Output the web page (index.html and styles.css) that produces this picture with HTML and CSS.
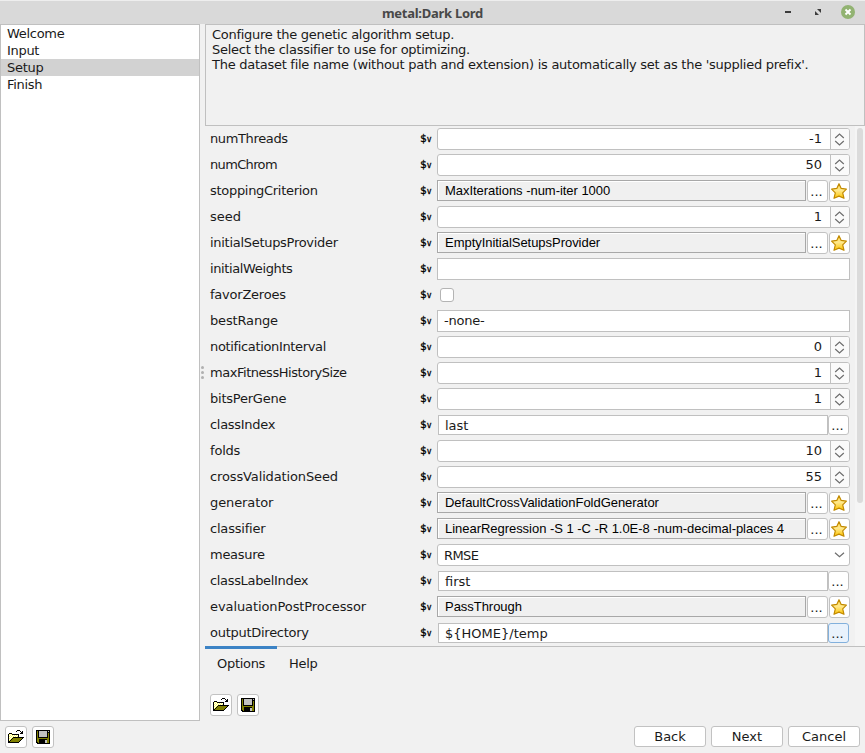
FILE: index.html
```html
<!DOCTYPE html>
<html lang="en">
<head>
<meta charset="utf-8">
<title>metal:Dark Lord</title>
<link rel="stylesheet" href="styles.css">
</head>
<body>
<svg class="defs" aria-hidden="true">
  <defs>
    <linearGradient id="gold" x1="0" y1="0" x2="0" y2="1"><stop offset="0" stop-color="#ffd84a"/><stop offset=".45" stop-color="#ffe98e"/><stop offset="1" stop-color="#fdc400"/></linearGradient>
  </defs>
  <symbol id="star" viewBox="0 0 16 16"><path d="M8 .7l2.200 4.700 5.200.7-3.700 3.700 1.300 5.500L8 13.100l-5 2.200 1.300-5.500L.6 6.100l5.200-.7z" fill="url(#gold)" stroke="#c28a00" stroke-width="1.2" stroke-linejoin="round"/></symbol>
  <symbol id="updown" viewBox="0 0 11 13"><path d="M1.200 5l4.300-4L9.800 5M1.200 8l4.300 4L9.800 8" fill="none" stroke="#6e6e6e" stroke-width="1.2"/></symbol>
  <symbol id="down" viewBox="0 0 11 6"><path d="M1 .7l4.500 4 4.500-4" fill="none" stroke="#6e6e6e" stroke-width="1.2"/></symbol>
  <symbol id="open" viewBox="0 0 16 14"><path fill="#ff6" d="M1 4h3v1h6v3H5v1H4v1H3v1H2v1H1z"/><path fill="#fff" d="M2 4h1v1H2zM1 5h1v1H1zM3 5h1v1H3zM5 5h1v1H5zM7 5h1v1H7zM9 5h1v1H9zM2 6h1v1H2zM4 6h1v1H4zM6 6h1v1H6zM8 6h1v1H8zM1 7h1v1H1zM3 7h1v1H3zM2 8h1v1H2zM1 9h1v1H1z"/><path fill="#808000" d="M5 8h9v1h-1v1h-1v1h-1v1H2v-1h1v-1h1V9h1z"/><path d="M9 0h3v1H9zM8 1h1v1H8zM12 1h1v1h-1zM14 1h1v3h-3V3h1V2h1zM1 3h3v1H1zM0 4h1v9H0zM4 4h7v1H4zM10 5h1v2h-1zM5 7h11v1H5zM4 8h1v1H4zM14 8h1v1h-1zM3 9h1v1H3zM13 9h1v1h-1zM2 10h1v1H2zM12 10h1v1h-1zM1 11h1v1H1zM11 11h1v1h-1zM1 12h10v1H1z"/></symbol>
  <symbol id="save" viewBox="0 0 14 14"><path d="M0 0h14v14H1v-1H0z"/><path fill="#808000" d="M1 1h1v7h10V3h1v10h-2V9H3v4H2v-1H1z"/><path fill="#c0c0c0" d="M3 1h8v6H3zM12 1h1v1h-1zM9 10h2v3H9z"/></symbol>
</svg>

<header class="titlebar">
  <h1>metal:Dark Lord</h1>
  <svg class="win-controls" width="72" height="16" viewBox="0 0 72 16"><path fill="#3c3c3c" d="M2 7h6v2H2zM34 5h4v4zM32 7v4h4z"/><path stroke="#d9d9d9" stroke-width="1" d="M32 5l6 6"/><circle cx="65" cy="8" r="7" fill="#92b372"/><path d="M62.500 5.500l5 5m0-5l-5 5" stroke="#fff" stroke-width="1.900"/></svg>
</header>

<main class="body">
  <nav class="pages">
    <div class="page">Welcome</div><div class="page">Input</div><div class="page selected">Setup</div><div class="page">Finish</div>
  </nav>
  <div class="splitter"><i></i><i></i><i></i></div>
  <section class="content">
    <div class="info">Configure the genetic algorithm setup.<br>Select the classifier to use for optimizing.<br>The dataset file name (without path and extension) is automatically set as the 'supplied prefix'.</div>
    <div class="scroll">
      <div class="form" id="form"></div>
      <div class="track"><div class="thumb"></div></div>
    </div>
    <div class="tabs"><div class="tab active">Options</div><div class="tab">Help</div></div>
    <div class="tools">
      <button class="btn icon"><svg class="px" width="16" height="14"><use href="#open"/></svg></button>
      <button class="btn icon"><svg class="px" width="14" height="14"><use href="#save"/></svg></button>
    </div>
  </section>
</main>

<footer class="footer">
  <button class="btn icon"><svg class="px" width="16" height="14"><use href="#open"/></svg></button>
  <button class="btn icon"><svg class="px" width="14" height="14"><use href="#save"/></svg></button>
  <span class="grow"></span>
  <button class="btn action">Back</button><button class="btn action">Next</button><button class="btn action">Cancel</button>
</footer>
<script src="form.js"></script>
</body>
</html>
```
FILE: styles.css
```css
* { box-sizing: border-box; }
body {
  margin: 0; width: 865px; height: 753px; overflow: hidden;
  display: flex; flex-direction: column;
  background: #f1f1f1; color: #1a1a1a;
  font: 13px/15px "DejaVu Sans", sans-serif;
}
.defs { position: absolute; width: 0; height: 0; }
svg { display: block; flex: none; }
.px { shape-rendering: crispEdges; }

.titlebar {
  height: 24px; flex: none; display: grid; grid-template-columns: 1fr auto 1fr; align-items: center;
  background: #d9d9d9; border-top: 1px solid #eee;
}
.titlebar h1 { grid-column: 2; margin: 1px 0 0; font: bold 13px/16px "Noto Sans", sans-serif; letter-spacing: -.27px; color: #484848; }
.win-controls { justify-self: end; margin: -1px 10px 0 0; }

.body { height: 697px; flex: none; display: flex; }
.pages { width: 200px; background: #fff; border: 1px solid #c0c0c0; letter-spacing: -.3px; }
.page { height: 17px; line-height: 17px; padding-left: 6px; }
.selected { background: #d2d2d2; }
.splitter { width: 5px; display: flex; flex-direction: column; align-items: center; justify-content: center; gap: 2px; }
.splitter i { width: 3px; height: 3px; border-radius: 50%; background: #b0b0b0; }
.content { width: 660px; display: flex; flex-direction: column; }
.info { height: 102px; flex: none; border: 1px solid #c0c0c0; padding: 2px 6px; white-space: nowrap; letter-spacing: -.27px; }

.scroll { height: 520px; flex: none; display: flex; overflow: hidden; }
.form { width: 645px; padding: 2px 0 0 5px; }
.track { margin-left: auto; width: 10px; padding: 2px 2px 0; background: #f5f5f5; }
.thumb { width: 6px; height: 375px; border-radius: 3px; background: #dbdbdb; }
.row { height: 26px; display: flex; align-items: flex-start; }
.label { width: 210px; line-height: 22px; }
.var { width: 17px; line-height: 22px; font-family: "DejaVu Sans Mono", monospace; font-size: 11px; color: #000; white-space: nowrap; -webkit-text-stroke: .3px #000; }
.var small { font-size: 8px; }
.box { height: 22px; border: 1px solid #c0c0c0; background: #fff; line-height: 21px; padding-left: 6px; white-space: pre; }
.full { width: 413px; }
.text { line-height: 19px; letter-spacing: -.2px; }
.spin { display: flex; border-radius: 3px; overflow: hidden; padding: 0; }
.spin span { flex: 1; text-align: right; padding-right: 8px; line-height: 20px; }
.spin b { width: 20px; margin-right: -1px; padding-right: 3px; border-left: 1px solid #c0c0c0; background: #fafafa; display: grid; place-items: center; }
.combo { display: flex; align-items: center; justify-content: space-between; border-radius: 3px; padding-right: 4px; letter-spacing: -.6px; }
.goe { width: 369px; height: 21px; margin-right: 1px; border-color: #a8a8a8; background: #f0f0f0; box-shadow: inset 1px 1px #fff; padding-left: 7px; line-height: 19px; font-family: "Liberation Sans", sans-serif; letter-spacing: -.035px; color: #000; }
.path { width: 390px; height: 20px; margin: 1px 0 0 1px; padding-left: 6px; line-height: 20px; }
.checkbox { width: 14px; height: 14px; margin: 4px 0 0 3px; background: #fff; border: 1px solid #b4b4b4; border-radius: 3px; }

.btn {
  height: 22px; margin: 0; padding: 0; display: grid; place-items: center;
  border: 1px solid #c2c2c2; border-radius: 3px; background: #fff; color: #1a1a1a; font: inherit;
}
.icon { width: 22px; }
.dots { width: 21px; margin-right: 1px; padding-right: 2px; line-height: 22px; }
.fav { width: 21px; padding-right: 1px; }
.pathbtn { width: 21px; height: 20px; margin-top: 1px; padding-right: 2px; }
.focus { border-color: #82b0dc; background: #e9f2fc; }

.tabs { height: 34px; flex: none; display: flex; border-top: 1px solid #c0c0c0; letter-spacing: -.3px; }
.tab { padding: 9px 12px 0; }
.active { border-top: 3px solid #3c83c5; margin-top: -1px; padding-top: 7px; width: 72px; }
.tools { display: flex; gap: 5px; padding: 14px 5px; }
.footer { flex: 1; display: flex; gap: 5px; padding: 5px 5px 0; }
.grow { flex: 1; }
.action { width: 72px; height: 21px; line-height: 19px; }
```
FILE: form.js
```js
// name, tracking in px, field kind, value, state
const rows = [
  ["numThreads", -.37, "spin", "-1"], ["numChrom", -.65, "spin", "50"],
  ["stoppingCriterion", -.3, "goe", "MaxIterations -num-iter 1000"], ["seed", 0, "spin", "1"],
  ["initialSetupsProvider", -.29, "goe", "EmptyInitialSetupsProvider"], ["initialWeights", -.38, "text", ""],
  ["favorZeroes", -.23, "check", ""], ["bestRange", -.15, "text", "-none-"],
  ["notificationInterval", -.35, "spin", "0"], ["maxFitnessHistorySize", -.46, "spin", "1"],
  ["bitsPerGene", -.23, "spin", "1"], ["classIndex", -.3, "path", "last"],
  ["folds", -.2, "spin", "10"], ["crossValidationSeed", -.13, "spin", "55"],
  ["generator", -.11, "goe", "DefaultCrossValidationFoldGenerator"],
  ["classifier", -.2, "goe", "LinearRegression -S 1 -C -R 1.0E-8 -num-decimal-places 4"],
  ["measure", -.28, "combo", "RMSE"], ["classLabelIndex", -.33, "path", "first"],
  ["evaluationPostProcessor", -.09, "goe", "PassThrough"], ["outputDirectory", -.27, "path", "${HOME}/temp", "focus"]
];
const icon = (id, w, h) => `<svg width="${w}" height="${h}"><use href="#${id}"/></svg>`;
const fields = {
  spin: v => `<div class="box full spin"><span>${v}</span><b>${icon("updown", 11, 13)}</b></div>`,
  goe: v => `<div class="box goe">${v}</div><button class="btn dots">...</button><button class="btn fav">${icon("star", 16, 16)}</button>`,
  text: v => `<div class="box full text">${v}</div>`,
  check: () => `<div class="checkbox"></div>`,
  combo: v => `<div class="box full combo">${v}${icon("down", 11, 6)}</div>`,
  path: (v, c) => `<div class="box path">${v}</div><button class="btn pathbtn ${c || ""}">...</button>`
};
document.getElementById("form").innerHTML = rows.map(([name, track, kind, value, extra]) =>
  `<div class="row"><div class="label" style="letter-spacing:${track}px">${name}</div><div class="var">$<small>v</small></div>${fields[kind](value, extra)}</div>`
).join("");
```
